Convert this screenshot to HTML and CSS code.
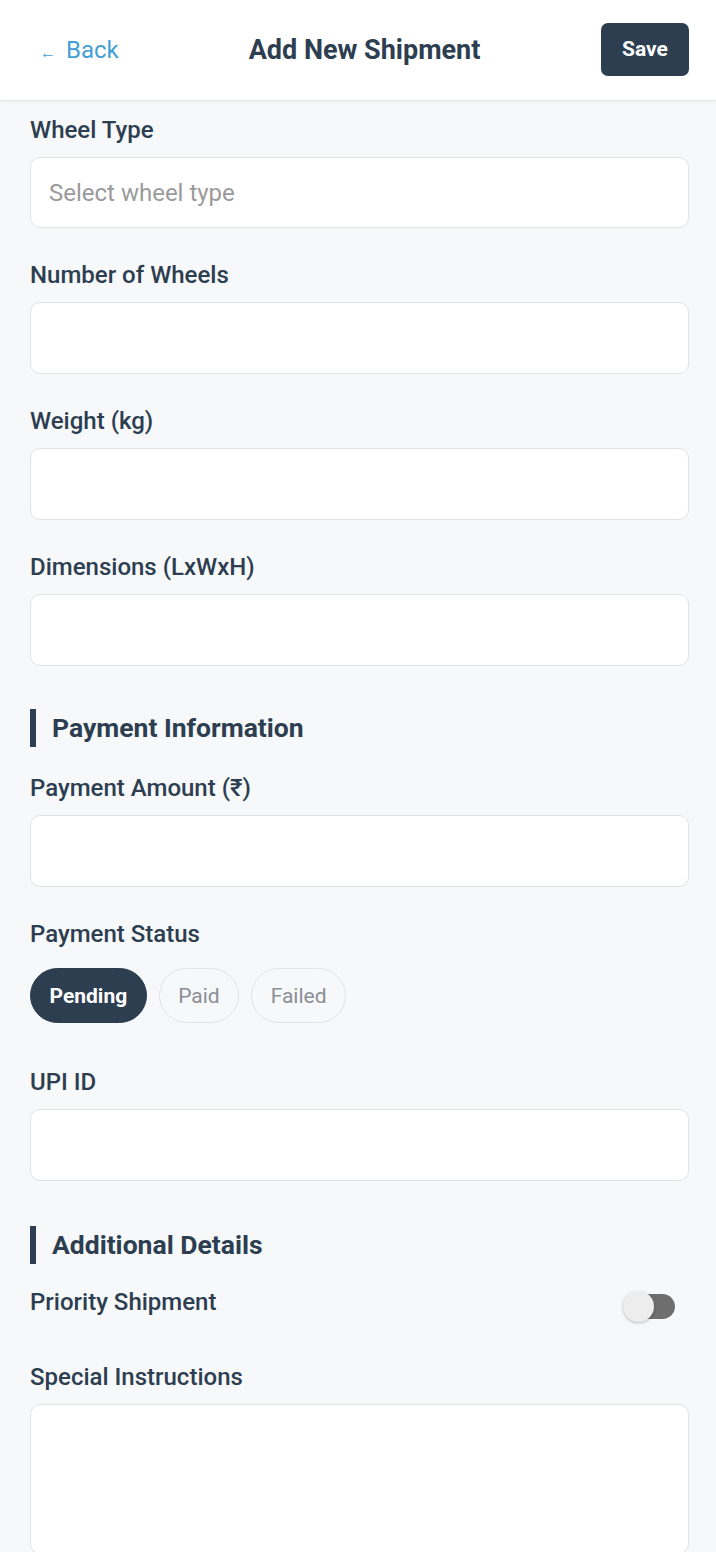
FILE: index.html
```html
<!DOCTYPE html>
<html lang="en">
<head>
<meta charset="utf-8">
<title>Add New Shipment</title>
<link rel="stylesheet" href="styles.css">
</head>
<body>
<header class="topbar">
  <a class="back" href="#"><span class="arrow">←</span> Back</a>
  <h1 class="title">Add New Shipment</h1>
  <button class="save">Save</button>
</header>
<main class="form">
  <div class="field">
    <label class="label">Wheel Type</label>
    <div class="input placeholder">Select wheel type</div>
  </div>
  <div class="field">
    <label class="label">Number of Wheels</label>
    <div class="input"></div>
  </div>
  <div class="field">
    <label class="label">Weight (kg)</label>
    <div class="input"></div>
  </div>
  <div class="field">
    <label class="label">Dimensions (LxWxH)</label>
    <div class="input"></div>
  </div>

  <h2 class="section first">Payment Information</h2>
  <div class="field">
    <label class="label">Payment Amount (₹)</label>
    <div class="input"></div>
  </div>
  <div class="field chips-field">
    <label class="label">Payment Status</label>
    <div class="chips">
      <span class="chip active">Pending</span>
      <span class="chip">Paid</span>
      <span class="chip">Failed</span>
    </div>
  </div>
  <div class="field">
    <label class="label">UPI ID</label>
    <div class="input"></div>
  </div>

  <h2 class="section">Additional Details</h2>
  <div class="toggle-row">
    <label class="label">Priority Shipment</label>
    <span class="switch"><span class="track"></span><span class="thumb"></span></span>
  </div>
  <div class="field">
    <label class="label">Special Instructions</label>
    <div class="input textarea"></div>
  </div>
</main>
</body>
</html>
```

FILE: styles.css
```css
* { box-sizing: border-box; }
html, body {
  margin: 0;
  padding: 0;
  background: #f7f8fa;
  font-family: Roboto, "Noto Sans", "Liberation Sans", sans-serif;
  color: #2c3e50;
}
.topbar {
  height: 100px;
  background: #ffffff;
  display: grid;
  grid-template-columns: 1fr auto 1fr;
  align-items: center;
  padding: 0 27px 0 40px;
  box-shadow: 0 1px 0 #e6e8eb, 0 2px 3px rgba(0,0,0,0.04);
  position: relative;
}
.back {
  justify-self: start;
  color: #449fd6;
  text-decoration: none;
  font-size: 24px;
  display: flex;
  align-items: center;
  gap: 10px;
}
.back .arrow { font-size: 16px; margin-top: 5px; }
.title {
  margin: 0;
  font-size: 27px;
  font-weight: 700;
  color: #2c3e50;
  text-align: center;
}
.save {
  justify-self: end;
  width: 88px;
  height: 53px;
  border: none;
  border-radius: 7px;
  background: #2c3e50;
  color: #fff;
  font-family: inherit;
  font-size: 21px;
  font-weight: 700;
  margin-top: -2px;
}
.form {
  padding: 17px 27px 0 30px;
}
.field { margin-bottom: 34px; }
.label {
  display: block;
  font-size: 24px;
  line-height: 26px;
  font-weight: 500;
  color: #2c3e50;
  margin-bottom: 14px;
}
.input {
  height: 72px;
  background: #fff;
  border: 1px solid #dfe2e6;
  border-radius: 10px;
  display: flex;
  align-items: center;
  padding: 0 18px;
  font-size: 24px;
}
.field:first-child .input { margin-top: 1px; height: 71px; }
.placeholder { color: #9a9a9a; }
.textarea { height: 150px; }
.section {
  margin: 45px 0 28px;
  border-left: 6px solid #2c3e50;
  padding-left: 16px;
  font-size: 26.5px;
  line-height: 38px;
  font-weight: 700;
  color: #2c3e50;
}
.section.first { margin-top: 43px; }
.chips-field .label { margin-bottom: 21px; }
.chips-field { margin-bottom: 46px; }
.chips { display: flex; gap: 12px; }
.chip {
  height: 55px;
  border-radius: 28px;
  border: 1px solid #e1e3e6;
  padding: 0 18.5px;
  display: inline-flex;
  align-items: center;
  font-size: 21px;
  color: #8a8f94;
  background: #f7f8fa;
}
.chip.active {
  background: #2c3e50;
  border-color: #2c3e50;
  color: #fff;
  font-weight: 700;
}
.toggle-row {
  display: flex;
  justify-content: space-between;
  align-items: flex-start;
  margin-top: -3px;
  margin-bottom: 42px;
}
.toggle-row .label { margin-bottom: 0; }
.switch {
  position: relative;
  width: 52px;
  height: 32px;
  margin-right: 14px;
  margin-top: 1px;
}
.track {
  position: absolute;
  left: 5px;
  right: 0;
  top: 4px;
  height: 25px;
  border-radius: 13px;
  background: #6e6e6e;
}
.thumb {
  position: absolute;
  left: 0;
  top: 1px;
  width: 31px;
  height: 31px;
  border-radius: 50%;
  background: #ededed;
  box-shadow: 0 1px 3px rgba(0,0,0,0.25);
}
```
